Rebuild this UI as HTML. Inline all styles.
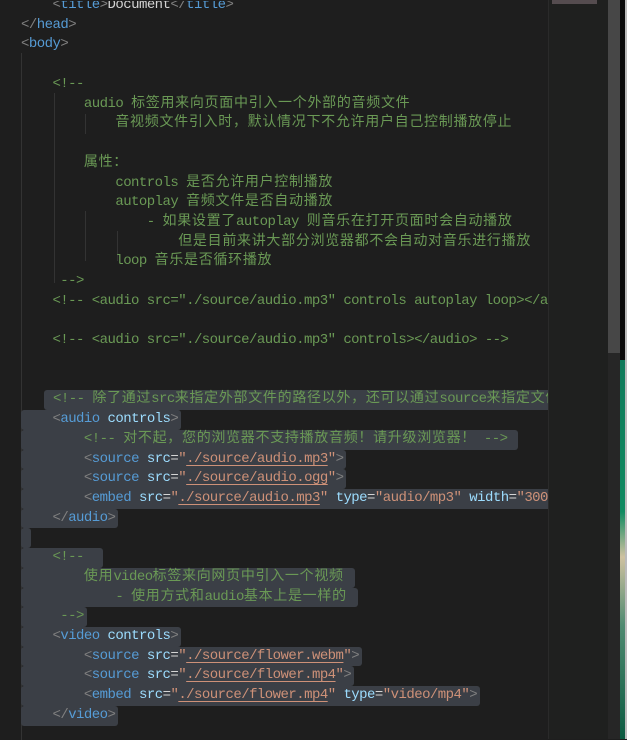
<!DOCTYPE html>
<html><head><meta charset="utf-8"><style>
html,body{margin:0;padding:0;background:#1e1e1e;width:627px;height:739px;overflow:hidden}
#ed{position:absolute;left:0;top:1px;width:548px;height:739px;overflow:hidden;background:#1e1e1e}
.l{position:absolute;left:21px;height:19.72px;line-height:19.72px;white-space:pre;font-family:"Liberation Mono","Noto Sans CJK SC",monospace;font-size:14px;letter-spacing:-0.54px;color:#d4d4d4}
.k{letter-spacing:0.7px}
.s{background:#3b3f46;border-radius:3px;padding-right:3px;display:inline-block;height:19.72px;vertical-align:top}
.c{color:#6a9955}.t{color:#569cd6}.b{color:#808080}.a{color:#9cdcfe}.q{color:#ce9178}
.u{color:#ce9178;text-decoration:underline;text-decoration-color:#ce9178;text-underline-offset:3px}
.g{position:absolute;width:1px;background:#333}
</style></head><body>
<div id="ed">
<div class="g" style="left:21px;top:52px;height:690px"></div>
<div class="g" style="left:54px;top:92px;height:190px"></div>
<div class="g" style="left:85px;top:113px;height:20px"></div>
<div class="g" style="left:85px;top:210px;height:50px"></div>
<div class="g" style="left:117px;top:230px;height:30px"></div>

<div class="l" style="top:-5px">    <span class="b">&lt;</span><span class="t">title</span><span class="b">&gt;</span>Document<span class="b">&lt;/</span><span class="t">title</span><span class="b">&gt;</span></div>
<div class="l" style="top:14.7px"><span class="b">&lt;/</span><span class="t">head</span><span class="b">&gt;</span></div>
<div class="l" style="top:34.4px"><span class="b">&lt;</span><span class="t">body</span><span class="b">&gt;</span></div>
<div class="l c" style="top:73.9px">    &lt;!--</div>
<div class="l c" style="top:93.6px">        audio <span class="k">标签用来向页面中引入一个外部的音频文件</span></div>
<div class="l c" style="top:113.3px">            <span class="k">音视频文件引入时，默认情况下不允许用户自己控制播放停止</span></div>
<div class="l c" style="top:152.8px">        <span class="k">属性：</span></div>
<div class="l c" style="top:172.5px">            controls <span class="k">是否允许用户控制播放</span></div>
<div class="l c" style="top:192.2px">            autoplay <span class="k">音频文件是否自动播放</span></div>
<div class="l c" style="top:211.9px">                - <span class="k">如果设置了</span>autoplay <span class="k">则音乐在打开页面时会自动播放</span></div>
<div class="l c" style="top:231.6px">                    <span class="k">但是目前来讲大部分浏览器都不会自动对音乐进行播放</span></div>
<div class="l c" style="top:251.4px">            loop <span class="k">音乐是否循环播放</span></div>
<div class="l c" style="top:271.1px">     --&gt;</div>
<div class="l c" style="top:290.8px">    &lt;!-- &lt;audio src="./source/audio.mp3" controls autoplay loop&gt;&lt;/audio&gt;</div>
<div class="l c" style="top:330.2px">    &lt;!-- &lt;audio src="./source/audio.mp3" controls&gt;&lt;/audio&gt; --&gt;</div>

<div class="l c" style="top:389.4px;left:44px"><span class="s" style="padding-left:9px">&lt;!-- <span class="k">除了通过</span>src<span class="k">来指定外部文件的路径以外，还可以通过</span>source<span class="k">来指定文件</span></span></div>
<div class="l" style="top:409.1px"><span class="s">    <span class="b">&lt;</span><span class="t">audio</span> <span class="a">controls</span><span class="b">&gt;</span></span></div>
<div class="l c" style="top:428.8px"><span class="s">        &lt;!-- <span class="k">对不起，您的浏览器不支持播放音频！请升级浏览器！</span> --&gt; </span></div>
<div class="l" style="top:448.6px"><span class="s">        <span class="b">&lt;</span><span class="t">source</span> <span class="a">src</span>=<span class="q">"</span><span class="u">./source/audio.mp3</span><span class="q">"</span><span class="b">&gt;</span></span></div>
<div class="l" style="top:468.3px"><span class="s">        <span class="b">&lt;</span><span class="t">source</span> <span class="a">src</span>=<span class="q">"</span><span class="u">./source/audio.ogg</span><span class="q">"</span><span class="b">&gt;</span></span></div>
<div class="l" style="top:488px"><span class="s">        <span class="b">&lt;</span><span class="t">embed</span> <span class="a">src</span>=<span class="q">"</span><span class="u">./source/audio.mp3</span><span class="q">"</span> <span class="a">type</span>=<span class="q">"audio/mp3"</span> <span class="a">width</span>=<span class="q">"300"</span> </span></div>
<div class="l" style="top:507.7px"><span class="s">    <span class="b">&lt;/</span><span class="t">audio</span><span class="b">&gt;</span></span></div>
<div class="l" style="top:527.4px"><span class="s" style="padding-right:0;width:10px"></span></div>
<div class="l c" style="top:547.1px"><span class="s">    &lt;!--  </span></div>
<div class="l c" style="top:566.8px"><span class="s">        <span class="k">使用</span>video<span class="k">标签来向网页中引入一个视频</span> </span></div>
<div class="l c" style="top:586.6px"><span class="s">            - <span class="k">使用方式和</span>audio<span class="k">基本上是一样的</span> </span></div>
<div class="l c" style="top:606.3px"><span class="s">     --&gt;</span></div>
<div class="l" style="top:626px"><span class="s">    <span class="b">&lt;</span><span class="t">video</span> <span class="a">controls</span><span class="b">&gt;</span></span></div>
<div class="l" style="top:645.7px"><span class="s">        <span class="b">&lt;</span><span class="t">source</span> <span class="a">src</span>=<span class="q">"</span><span class="u">./source/flower.webm</span><span class="q">"</span><span class="b">&gt;</span></span></div>
<div class="l" style="top:665.4px"><span class="s">        <span class="b">&lt;</span><span class="t">source</span> <span class="a">src</span>=<span class="q">"</span><span class="u">./source/flower.mp4</span><span class="q">"</span><span class="b">&gt;</span></span></div>
<div class="l" style="top:685.1px"><span class="s">        <span class="b">&lt;</span><span class="t">embed</span> <span class="a">src</span>=<span class="q">"</span><span class="u">./source/flower.mp4</span><span class="q">"</span> <span class="a">type</span>=<span class="q">"video/mp4"</span><span class="b">&gt;</span></span></div>
<div class="l" style="top:704.8px"><span class="s">    <span class="b">&lt;/</span><span class="t">video</span><span class="b">&gt;</span></span></div>
</div>
<div style="position:absolute;left:548px;top:0;width:60px;height:739px;background:#1f201f;border-left:1px solid #2a2a2a"></div>
<div style="position:absolute;left:552px;top:0;width:45px;height:4px;background:#7a6a70;opacity:.6"></div>
<div style="position:absolute;left:608px;top:0;width:12px;height:353px;background:#474747"></div>
<div style="position:absolute;left:608px;top:353px;width:12px;height:386px;background:#262626"></div>
<div style="position:absolute;left:620px;top:0;width:7px;height:360px;background:#0a0a0a"></div>
<div style="position:absolute;left:620px;top:360px;width:7px;height:379px;background:linear-gradient(#0f7a5a,#0f8a60 40%,#cfc2a0 52%,#4e8a70 70%,#0a5a40)"></div>
<div style="position:absolute;left:625px;top:0;width:2px;height:739px;background:#bbb"></div>
</body></html>
